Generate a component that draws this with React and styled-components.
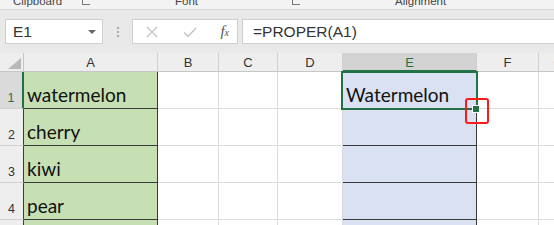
import React from "react";
import styled, { createGlobalStyle } from "styled-components";

const GlobalStyle = createGlobalStyle`
  html, body {
    margin: 0;
    padding: 0;
    background: #ffffff;
    font-family: "Liberation Sans", Arial, sans-serif;
  }
`;

const columns = [
  { key: "A", width: 134 },
  { key: "B", width: 61 },
  { key: "C", width: 59 },
  { key: "D", width: 65 },
  { key: "E", width: 134 },
  { key: "F", width: 62 },
  { key: "G", width: 40 },
];

const rows = [
  { n: 1, a: "watermelon", e: "Watermelon" },
  { n: 2, a: "cherry" },
  { n: 3, a: "kiwi" },
  { n: 4, a: "pear" },
  { n: 5, a: "" },
];

function App() {
  return (
    <Page>
      <GlobalStyle />
      <RibbonLabels>
        <GroupLabel style={{ width: 175 }}>
          <span style={{ marginLeft: 13 }}>Clipboard</span>
          <Launcher style={{ marginLeft: 20 }} />
        </GroupLabel>
        <GroupLabel style={{ width: 220 }}>
          <span>Font</span>
          <Launcher style={{ marginLeft: 94 }} />
        </GroupLabel>
        <GroupLabel>
          <span>Alignment</span>
        </GroupLabel>
      </RibbonLabels>

      <FormulaBar>
        <NameBox>
          <span>E1</span>
          <Caret />
        </NameBox>
        <Grip>
          <i />
          <i />
          <i />
        </Grip>
        <ActionBox>
          <ActionIcon>
            <svg width="14" height="14" viewBox="0 0 14 14">
              <path d="M2 2 L12 12 M12 2 L2 12" stroke="#c4c4c4" strokeWidth="1.4" fill="none" />
            </svg>
          </ActionIcon>
          <ActionIcon>
            <svg width="16" height="14" viewBox="0 0 16 14">
              <path d="M2 7.5 L6 11.5 L14 3" stroke="#c4c4c4" strokeWidth="1.5" fill="none" />
            </svg>
          </ActionIcon>
          <Fx>
            f<sub>x</sub>
          </Fx>
        </ActionBox>
        <FormulaInput>=PROPER(A1)</FormulaInput>
      </FormulaBar>

      <Sheet>
        <Corner>
          <svg width="13" height="11" viewBox="0 0 13 11">
            <polygon points="13,0 13,11 0,11" fill="#b8b8b8" />
          </svg>
        </Corner>
        {columns.map((c) => (
          <ColHeader key={c.key} $active={c.key === "E"}>
            {c.key}
          </ColHeader>
        ))}

        {rows.map((r) => (
          <React.Fragment key={r.n}>
            <RowHeader $active={r.n === 1}>{r.n}</RowHeader>
            {columns.map((c) => {
              if (c.key === "A") {
                return (
                  <Cell key={c.key} $fill="#c6e0b4" $boxed>
                    {r.a}
                  </Cell>
                );
              }
              if (c.key === "E") {
                return (
                  <Cell key={c.key} $fill="#d9e1f2" $boxed>
                    {r.e || ""}
                    {r.n === 1 && (
                      <>
                        <Selection />
                        <FillHandle />
                        <Callout />
                      </>
                    )}
                  </Cell>
                );
              }
              return <Cell key={c.key} />;
            })}
          </React.Fragment>
        ))}
      </Sheet>
    </Page>
  );
}

export default App;

const Page = styled.div`
  width: 554px;
  height: 225px;
  overflow: hidden;
  background: #ffffff;
`;

const RibbonLabels = styled.div`
  display: flex;
  align-items: flex-end;
  height: 9px;
  overflow: hidden;
  background: #f3f3f3;
  border-bottom: 1px solid #d6d6d6;
  font-family: "Liberation Sans", Arial, sans-serif;
  font-size: 11.5px;
  color: #444444;
`;

const GroupLabel = styled.div`
  display: flex;
  align-items: flex-end;
  line-height: 12px;
  margin-bottom: 2px;
  white-space: nowrap;
`;

const Launcher = styled.span`
  display: inline-block;
  width: 7px;
  height: 7px;
  border-left: 1px solid #777;
  border-bottom: 1px solid #777;
  margin-bottom: 2px;
`;

const FormulaBar = styled.div`
  display: flex;
  align-items: center;
  height: 43px;
  padding: 0 0 0 5px;
  background: #e9e9e9;
  box-sizing: border-box;
`;

const Box = styled.div`
  display: flex;
  align-items: center;
  height: 25px;
  background: #ffffff;
  border: 1px solid #cfcfcf;
  box-sizing: border-box;
`;

const NameBox = styled(Box)`
  width: 98px;
  padding: 0 6px 0 7px;
  justify-content: space-between;
  font-size: 15.5px;
  color: #333333;
`;

const Caret = styled.span`
  width: 0;
  height: 0;
  border-left: 4px solid transparent;
  border-right: 4px solid transparent;
  border-top: 4px solid #666666;
`;

const Grip = styled.div`
  display: flex;
  flex-direction: column;
  gap: 2px;
  width: 29px;
  align-items: center;
  i {
    display: block;
    width: 2px;
    height: 2px;
    background: #a8a8a8;
  }
`;

const ActionBox = styled(Box)`
  width: 106px;
  padding: 0 8px 0 12px;
  justify-content: space-between;
`;

const ActionIcon = styled.span`
  display: flex;
  align-items: center;
`;

const Fx = styled.span`
  font-family: "Liberation Serif", "Times New Roman", serif;
  font-style: italic;
  font-size: 15px;
  color: #555555;
  sub {
    font-size: 10px;
    vertical-align: baseline;
  }
`;

const FormulaInput = styled(Box)`
  flex: 1;
  margin-left: 4px;
  padding-left: 10px;
  border-right: none;
  font-size: 15.5px;
  color: #333333;
`;

const Sheet = styled.div`
  display: grid;
  grid-template-columns: 24px 134px 61px 59px 65px 134px 62px 40px;
  grid-template-rows: 19px repeat(5, 37px);
`;

const Corner = styled.div`
  display: flex;
  align-items: flex-end;
  justify-content: flex-end;
  padding: 0 2px 2px 0;
  background: #eeeeee;
  border-right: 1px solid #c6c6c6;
  border-bottom: 1px solid #c6c6c6;
  box-sizing: border-box;
`;

const ColHeader = styled.div`
  display: flex;
  align-items: center;
  justify-content: center;
  box-sizing: border-box;
  background: ${(p) => (p.$active ? "#d3d3d3" : "#eeeeee")};
  color: ${(p) => (p.$active ? "#217346" : "#333333")};
  border-right: 1px solid #d0d0d0;
  border-bottom: ${(p) => (p.$active ? "2px solid #217346" : "1px solid #c6c6c6")};
  font-size: 13px;
  padding-top: 1px;
`;

const RowHeader = styled.div`
  display: flex;
  align-items: flex-end;
  justify-content: center;
  padding-bottom: 3px;
  box-sizing: border-box;
  background: ${(p) => (p.$active ? "#dadada" : "#eeeeee")};
  color: ${(p) => (p.$active ? "#217346" : "#333333")};
  border-right: ${(p) => (p.$active ? "2px solid #217346" : "1px solid #3c3c3c")};
  border-bottom: 1px solid #d0d0d0;
  font-size: 12.5px;
`;

const Cell = styled.div`
  position: relative;
  display: flex;
  align-items: flex-end;
  padding: 0 0 2px 3px;
  box-sizing: border-box;
  background: ${(p) => p.$fill || "#ffffff"};
  border-right: 1px solid ${(p) => (p.$boxed ? "#3a3a3a" : "#dadada")};
  border-bottom: 1px solid ${(p) => (p.$boxed ? "#3a3a3a" : "#dadada")};
  font-family: Lato, "Open Sans", sans-serif;
  font-size: 19px;
  line-height: 22px;
  color: #111111;
  white-space: nowrap;
`;

const Selection = styled.div`
  position: absolute;
  z-index: 2;
  top: -1px;
  left: -2px;
  right: -2px;
  bottom: -2px;
  border: 2px solid #217346;
  pointer-events: none;
`;

const FillHandle = styled.div`
  position: absolute;
  z-index: 3;
  left: 129px;
  top: 33px;
  width: 6px;
  height: 6px;
  background: #217346;
  border: 1px solid #ffffff;
`;

const Callout = styled.div`
  position: absolute;
  z-index: 4;
  left: 122px;
  top: 26px;
  width: 24px;
  height: 26px;
  box-sizing: border-box;
  border: 2.5px solid #ff1a1a;
  border-radius: 3px;
`;
